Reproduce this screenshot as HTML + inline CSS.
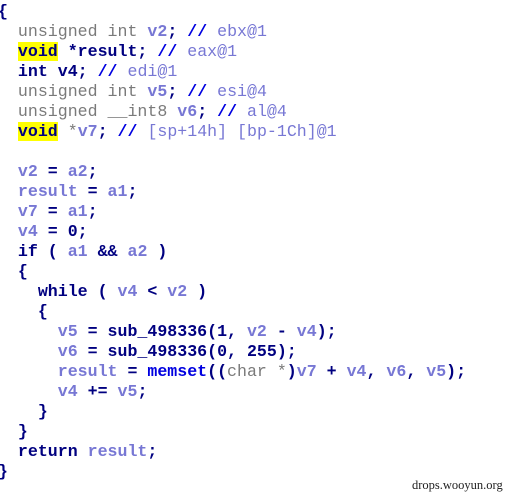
<!DOCTYPE html>
<html><head><meta charset="utf-8"><style>
html,body{margin:0;padding:0;background:#fff;width:520px;height:499px;overflow:hidden;position:relative}
pre{margin:0;position:absolute;left:-2px;top:2px;font-family:"Liberation Mono",monospace;font-size:16.6px;line-height:20px;color:#000080;font-weight:bold;white-space:pre}
.g{color:#7a7a7a;font-weight:normal}
.v{color:#7777d4;font-weight:bold}
.c{color:#7777d4;font-weight:normal}
.s{color:#0000e0}
.y{background:#ffff00}
.wm{position:absolute;left:412px;top:478px;font-family:"Liberation Serif",serif;font-size:12.5px;color:#222}
</style></head><body>
<pre>{
  <span class="g">unsigned int</span> <span class="v">v2</span>; <span class="s">//</span> <span class="c">ebx@1</span>
  <span class="y">void</span> *result; <span class="s">//</span> <span class="c">eax@1</span>
  int v4; <span class="s">//</span> <span class="c">edi@1</span>
  <span class="g">unsigned int</span> <span class="v">v5</span>; <span class="s">//</span> <span class="c">esi@4</span>
  <span class="g">unsigned __int8</span> <span class="v">v6</span>; <span class="s">//</span> <span class="c">al@4</span>
  <span class="y">void</span> <span class="g">*</span><span class="v">v7</span>; <span class="s">//</span> <span class="c">[sp+14h] [bp-1Ch]@1</span>

  <span class="v">v2</span> = <span class="v">a2</span>;
  <span class="v">result</span> = <span class="v">a1</span>;
  <span class="v">v7</span> = <span class="v">a1</span>;
  <span class="v">v4</span> = 0;
  if ( <span class="v">a1</span> &amp;&amp; <span class="v">a2</span> )
  {
    while ( <span class="v">v4</span> &lt; <span class="v">v2</span> )
    {
      <span class="v">v5</span> = sub_498336(1, <span class="v">v2</span> - <span class="v">v4</span>);
      <span class="v">v6</span> = sub_498336(0, 255);
      <span class="v">result</span> = <span class="s">memset</span>((<span class="g">char *</span>)<span class="v">v7</span> + <span class="v">v4</span>, <span class="v">v6</span>, <span class="v">v5</span>);
      <span class="v">v4</span> += <span class="v">v5</span>;
    }
  }
  return <span class="v">result</span>;
}</pre>
<div class="wm">drops.wooyun.org</div>
</body></html>
